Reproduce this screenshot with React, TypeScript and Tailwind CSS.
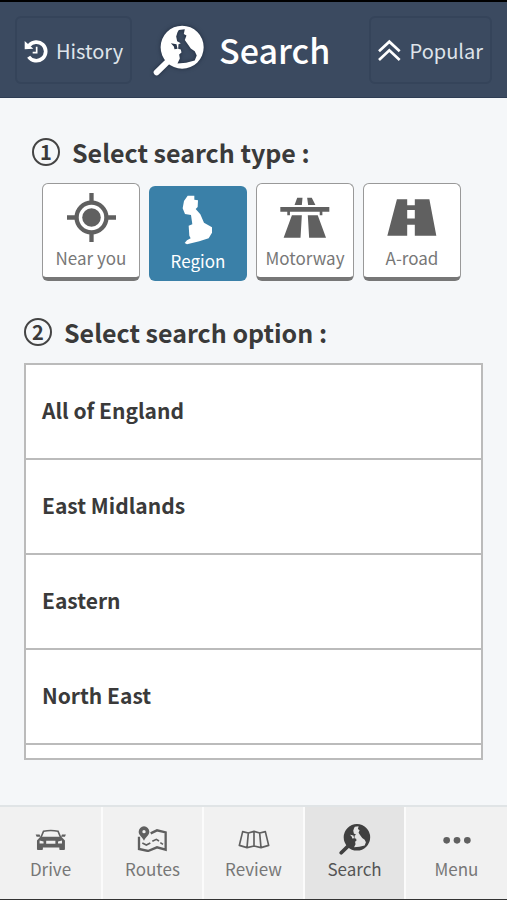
import { useState } from "react";
import type { ReactNode } from "react";

function HistoryIcon() {
  return (
    <svg viewBox="0 0 72 72" className="size-6" fill="none" stroke="currentColor" aria-hidden="true">
      <path d="M15 20 A28 28 0 1 1 14 53" strokeWidth="11" />
      <path d="M2 6 L2 31 L28 29 Z" fill="currentColor" stroke="none" />
      <path d="M38 23 V41 H26" strokeWidth="5" />
    </svg>
  );
}

function PopularIcon() {
  return (
    <svg viewBox="0 0 72 72" className="size-6" fill="none" stroke="currentColor" strokeWidth="8" aria-hidden="true">
      <path d="M3 37 L34 8 L65 37 M3 63 L34 34 L65 63" />
    </svg>
  );
}

function RegionSearchIcon({ className }: { className: string }) {
  return (
    <svg viewBox="25 22 155 157" className={className} fill="currentColor" aria-hidden="true">
      <path
        fillRule="evenodd"
        d="M112 27 a65 65 0 1 1 0 130 a65 65 0 1 1 0 -130 Z M102 40 L98 47 L94 60 L97 74 L108 80 L101 83 L100 97 L108 99 L110 108 L103 114 L105 126 L98 141 L124 139 L150 132 L156 117 L150 104 L138 96 L128 82 L120 70 L125 57 L117 52 L120 38 Z M78 80 L95 83 L98 97 L89 98 L87 90 Z"
      />
      <path d="M76 128 L35 168" stroke="currentColor" strokeWidth="18" strokeLinecap="round" />
    </svg>
  );
}

function NearIcon() {
  return (
    <svg viewBox="138 190 148 148" className="h-[49px]" fill="none" stroke="currentColor" aria-hidden="true">
      <circle cx="212" cy="264" r="45" strokeWidth="13" />
      <circle cx="212" cy="264" r="28" fill="currentColor" stroke="none" />
      <path d="M212 190 V218 M212 310 V338 M138 264 H166 M258 264 H286" strokeWidth="13" />
    </svg>
  );
}

function RegionIcon() {
  return (
    <svg viewBox="485 200 100 150" className="h-[50px]" fill="currentColor" aria-hidden="true">
      <path d="M505 202 H525 V214 L536 216 L535 236 L529 242 L543 258 L554 283 L566 290 L578 297 V313 L568 330 L540 339 L503 348 L496 344 L503 336 L514 330 L510 322 L508 292 L519 288 L515 260 L497 257 L490 240 L494 218 Z" />
    </svg>
  );
}

function MotorwayIcon() {
  return (
    <svg viewBox="91 190 150 148" className="h-[49px]" fill="currentColor" aria-hidden="true">
      <path d="M143 204 H159 L157 226 H135 Z M173 204 H187 L198 226 H176 Z M92 232 H240 V247 H219 V257 H211 V247 H121 V257 H113 V247 H92 Z M127 257 H157 L153 325 H102 Z M175 257 H205 L230 325 H179 Z" />
    </svg>
  );
}

function RoadIcon() {
  return (
    <svg viewBox="412 190 150 148" className="h-[49px]" fill="currentColor" aria-hidden="true">
      <path
        fillRule="evenodd"
        d="M442 209 H473 V227 H496 V209 H540 L561 319 H496 V286 H473 V319 H413 Z M473 241 V267 H496 V241 Z"
      />
    </svg>
  );
}

function CarIcon() {
  return (
    <svg viewBox="104 560 96 76" className="h-[25px]" fill="currentColor" aria-hidden="true">
      <path d="M122 592 L130 573 Q152 568 174 573 L182 592" fill="none" stroke="currentColor" strokeWidth="5" />
      <path d="M106 583 H118 L121 590 H109 Z M198 583 H186 L183 590 H195 Z" />
      <path
        fillRule="evenodd"
        d="M120 590 H184 L195 601 V628 Q195 630 192 630 H180 Q178 630 178 628 V622 H128 V628 Q128 630 125 630 H113 Q110 630 110 628 V601 Z M118 601 V610 H130 V604 Z M186 601 V610 H174 V604 Z M138 602 V611 H166 V602 Z"
      />
    </svg>
  );
}

function RoutesIcon() {
  return (
    <svg viewBox="410 560 92 78" className="h-[26px]" fill="none" stroke="currentColor" strokeWidth="7" aria-hidden="true">
      <path d="M451 582 L470 573 L496 579 V631 L470 624 L443 635 L416 629 V592" />
      <path d="M426 611 L438 617 L450 611 M456 606 L468 600 L476 605 M480 610 L488 615" strokeWidth="5" />
      <path
        fill="currentColor"
        stroke="none"
        fillRule="evenodd"
        d="M431 561 A16 16 0 0 1 447 577 C447 587 437 592 431 604 C425 592 415 587 415 577 A16 16 0 0 1 431 561 Z M431 572 a5 5 0 1 0 0 10 a5 5 0 1 0 0 -10 Z"
      />
    </svg>
  );
}

function MapIcon() {
  return (
    <svg viewBox="0 0 96 78" className="h-[26px]" fill="none" stroke="currentColor" strokeWidth="5" strokeLinejoin="round" aria-hidden="true">
      <path d="M14 17 L31 21 L48 16 L65 21 L82 17 L92 58 L69 65 L48 60 L27 65 L4 58 Z M31 21 L27 65 M48 16 V60 M65 21 L69 65" />
    </svg>
  );
}

function DotsIcon() {
  return (
    <svg viewBox="0 0 84 78" className="h-[26px]" fill="currentColor" aria-hidden="true">
      <circle cx="11" cy="43" r="10" />
      <circle cx="42" cy="43" r="10" />
      <circle cx="73" cy="43" r="10" />
    </svg>
  );
}

const searchTypes: { name: string; icon: ReactNode }[] = [
  { name: "Near you", icon: <NearIcon /> },
  { name: "Region", icon: <RegionIcon /> },
  { name: "Motorway", icon: <MotorwayIcon /> },
  { name: "A-road", icon: <RoadIcon /> },
];

const regions = ["All of England", "East Midlands", "Eastern", "North East"];

const tabs: { name: string; icon: ReactNode }[] = [
  { name: "Drive", icon: <CarIcon /> },
  { name: "Routes", icon: <RoutesIcon /> },
  { name: "Review", icon: <MapIcon /> },
  { name: "Search", icon: <RegionSearchIcon className="size-8" /> },
  { name: "Menu", icon: <DotsIcon /> },
];

function StepHeading({ step, children }: { step: number; children: ReactNode }) {
  return (
    <h2 className="flex items-center gap-3 text-[25px] leading-8 font-bold text-[#3a3a3a]">
      <span className="flex size-7 items-center justify-center rounded-full border-2 border-[#444] text-xl leading-6">
        {step}
      </span>
      {children}
    </h2>
  );
}

const headerButton =
  "flex h-[68px] items-center gap-2 rounded-md border-2 border-[#35445a] px-[7px] pt-0.5 text-xl text-[#dfe4ea]";

export default function App() {
  const [type, setType] = useState("Region");

  return (
    <div className="flex min-h-screen flex-col border-t-2 border-b border-t-black border-b-[#333] bg-[#f5f7f9] font-['Noto_Sans_CJK_SC','Noto_Sans',sans-serif]">
      <header className="flex h-24 items-center justify-between border-b border-[#2e3d54] bg-[#3b4a60] px-[15px]">
        <div className="flex items-center gap-[21px]">
          <button type="button" className={headerButton}>
            <span className="text-white"><HistoryIcon /></span>
            History
          </button>
          <h1 className="flex items-center gap-[14px] text-[34px] leading-10 font-medium text-white">
            <RegionSearchIcon className="size-[52px] drop-shadow-[0_0_2px_#1f2b3d]" />
            Search
          </h1>
        </div>
        <button type="button" className={headerButton}>
          <span className="text-white"><PopularIcon /></span>
          Popular
        </button>
      </header>

      <main className="flex-1">
        <section className="pt-[38px]">
          <div className="pl-8">
            <StepHeading step={1}>Select search type :</StepHeading>
          </div>
          <div className="mt-[15px] grid grid-cols-4 items-end gap-[9px] pr-[46px] pl-[42px]">
            {searchTypes.map(({ name, icon }) => (
              <button
                key={name}
                type="button"
                aria-pressed={type === name}
                onClick={() => setType(name)}
                className={
                  type === name
                    ? "flex h-[95px] flex-col items-center rounded-md bg-[#3a80a8] pt-[9px] text-[17px] leading-8 text-white"
                    : "flex h-[98px] flex-col items-center rounded-md border border-b-4 border-[#999] border-b-[#777] bg-white pt-[9px] text-[17px] leading-8 text-[#777]"
                }
              >
                <span className={type === name ? "text-white" : "text-[#606060]"}>{icon}</span>
                {name}
              </button>
            ))}
          </div>
        </section>

        <section className="px-6 pt-[35px]">
          <StepHeading step={2}>Select search option :</StepHeading>
          <ul className="mt-[15px] h-[397px] overflow-hidden border-2 border-[#bbb] bg-white">
            {regions.map((region) => (
              <li key={region} className="border-b-2 border-[#bbb]">
                <button type="button" className="flex h-[93px] w-full items-center px-4 pb-0.5 text-left text-[21px] font-bold text-[#3a3a3a]">
                  {region}
                </button>
              </li>
            ))}
          </ul>
        </section>
      </main>

      <nav className="grid h-[94px] grid-cols-[repeat(4,101fr)_103fr] border-t-2 border-[#e0e4e6] bg-[#fbfbfb]">
        {tabs.map(({ name, icon }) => (
          <a
            key={name}
            href={"#" + name.toLowerCase()}
            aria-current={name === "Search" ? "page" : undefined}
            className={
              name === "Search"
                ? "flex flex-col items-center border-l-2 border-[#fbfbfb] bg-[#e4e4e4] pt-4 text-[17px] leading-7 text-[#555]"
                : "flex flex-col items-center border-[#fbfbfb] bg-[#f1f1f1] pt-4 text-[17px] leading-7 text-[#777] not-first:border-l-2"
            }
          >
            <span className={name === "Search" ? "flex h-8 items-center text-[#404040]" : "flex h-8 items-center text-[#606060]"}>{icon}</span>
            {name}
          </a>
        ))}
      </nav>
    </div>
  );
}
